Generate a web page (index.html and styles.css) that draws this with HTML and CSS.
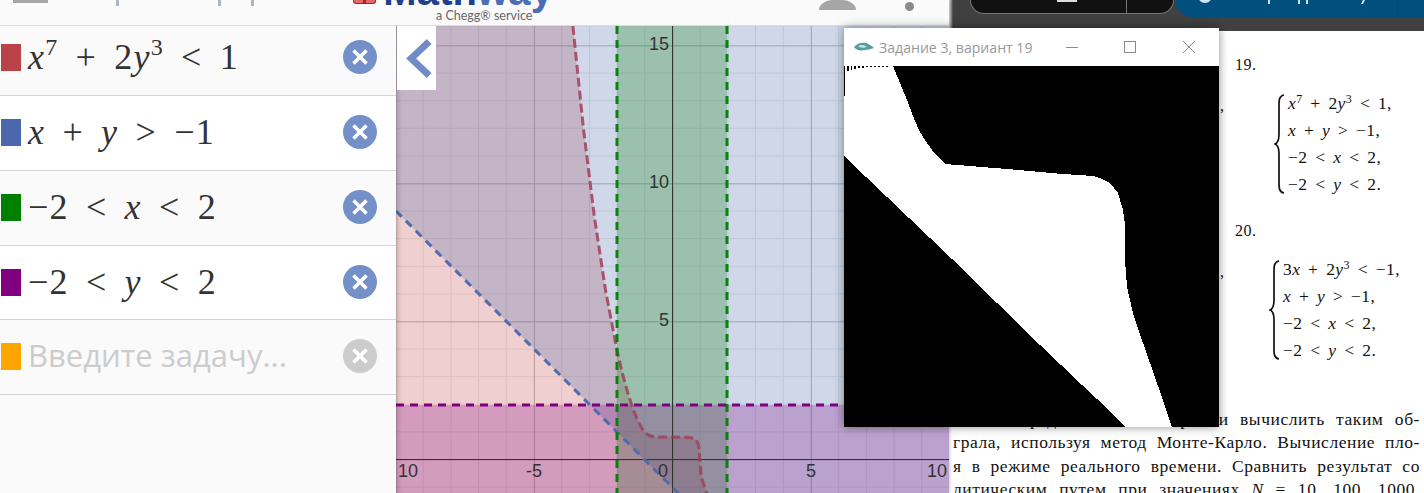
FILE: index.html
```html
<!DOCTYPE html>
<html lang="en">
<head>
    <meta charset="UTF-8">
    <meta name="viewport" content="width=device-width, initial-scale=1.0">
    <title>Задание 3, вариант 19</title>
    <link rel="stylesheet" href="styles.css">
</head>
<body>

<svg class="defs" width="0" height="0">
    <symbol id="closeIcon" viewBox="0 0 34 34">
        <circle cx="17" cy="17" r="17" fill="currentColor"/>
        <path d="M10.5 10.5 L23.5 23.5 M23.5 10.5 L10.5 23.5" stroke="#fff" stroke-width="3.6" fill="none"/>
    </symbol>
</svg>

<!-- pdf viewer, behind everything on the right -->
<div class="window pdf">
    <div class="pdf-toolbar">
        <div class="pill-dark">
            <span class="pill-glyph"></span>
            <span class="pill-divider"></span>
        </div>
        <div class="pill-blue">
            <span class="pill-circle"></span>
            <span class="tail tail-a"></span>
            <span class="tail tail-b"></span>
            <span class="tail tail-c"></span>
            <span class="tail tail-d"></span>
            <span class="pill-divider-blue"></span>
        </div>
    </div>
    <div class="pdf-page">
        <div class="problem-no">19.</div>
        <div class="system">
            <span class="comma">,</span>
            <svg class="brace" viewBox="0 0 11 100" width="11" height="100">
                <path d="M10 1 C5 2 5 6 5 12 L5 40 C5 46 4 49 1 50 C4 51 5 54 5 60 L5 88 C5 94 5 98 10 99" fill="none" stroke="#111" stroke-width="1.7"/>
            </svg>
            <div class="eqs">
                <div><i>x</i><sup>7</sup> + 2<i>y</i><sup>3</sup> &lt; 1,</div>
                <div><i>x</i> + <i>y</i> &gt; −1,</div>
                <div>−2 &lt; <i>x</i> &lt; 2,</div>
                <div>−2 &lt; <i>y</i> &lt; 2.</div>
            </div>
        </div>
        <div class="problem-no second">20.</div>
        <div class="system">
            <span class="comma">,</span>
            <svg class="brace brace-wide" viewBox="0 0 11 100" width="11" height="100">
                <path d="M10 1 C5 2 5 6 5 12 L5 40 C5 46 4 49 1 50 C4 51 5 54 5 60 L5 88 C5 94 5 98 10 99" fill="none" stroke="#111" stroke-width="1.7"/>
            </svg>
            <div class="eqs">
                <div>3<i>x</i> + 2<i>y</i><sup>3</sup> &lt; −1,</div>
                <div><i>x</i> + <i>y</i> &gt; −1,</div>
                <div>−2 &lt; <i>x</i> &lt; 2,</div>
                <div>−2 &lt; <i>y</i> &lt; 2.</div>
            </div>
        </div>
        <div class="pdf-text">
            <p>найти определённый интеграл и вычислить таким об-</p>
            <p>грала, используя метод Монте-Карло. Вычисление пло-</p>
            <p>я в режиме реального времени. Сравнить результат со</p>
            <p>литическим путем при значениях <i>N</i> = 10. 100. 1000,</p>
        </div>
    </div>
</div>

<!-- browser with the graphing page -->
<div class="window browser">
    <div class="site-header">
        <span class="hdr-bar"></span>
        <span class="hdr-tick tick-a"></span>
        <span class="hdr-tick tick-b"></span>
        <span class="hdr-tick tick-c"></span>
        <div class="logo">
            <div class="logo-top">
                <span class="logo-mark"></span>
                <span class="logo-word">Math<span class="logo-way">way</span></span>
            </div>
            <div class="logo-sub">a Chegg® service</div>
        </div>
        <span class="avatar"></span>
        <span class="menu-dot"></span>
    </div>
    <div class="site-main">
        <div class="sidebar">
            <div class="row row-first">
                <span class="swatch swatch-red"></span>
                <span class="math"><i>x</i><sup>7</sup> + 2<i>y</i><sup>3</sup> &lt; 1</span>
                <svg class="close"><use href="#closeIcon"/></svg>
            </div>
            <div class="row row-white">
                <span class="swatch swatch-blue"></span>
                <span class="math"><i>x</i> + <i>y</i> &gt; −1</span>
                <svg class="close"><use href="#closeIcon"/></svg>
            </div>
            <div class="row">
                <span class="swatch swatch-green"></span>
                <span class="math">−2 &lt; <i>x</i> &lt; 2</span>
                <svg class="close"><use href="#closeIcon"/></svg>
            </div>
            <div class="row row-white row-short">
                <span class="swatch swatch-purple"></span>
                <span class="math">−2 &lt; <i>y</i> &lt; 2</span>
                <svg class="close"><use href="#closeIcon"/></svg>
            </div>
            <div class="row">
                <span class="swatch swatch-orange"></span>
                <span class="placeholder">Введите задачу...</span>
                <svg class="close close-off"><use href="#closeIcon"/></svg>
            </div>
        </div>
        <div class="graph">
            <!-- viewBox uses page pixels: origin at 672,459, 27.7px per unit -->
            <svg class="plot" viewBox="396 26 553 467" width="553" height="467">
                <defs>
                    <pattern id="minorGrid" patternUnits="userSpaceOnUse" x="672" y="459" width="27.7" height="27.6">
                        <path d="M0 0 H27.7 M0 0 V27.6" stroke="#000" stroke-opacity=".09" stroke-width="2" fill="none"/>
                    </pattern>
                    <pattern id="majorGrid" patternUnits="userSpaceOnUse" x="672.5" y="459.5" width="138.5" height="138">
                        <path d="M0 0 H138.5 M0 0 V138" stroke="#000" stroke-opacity=".2" stroke-width="2" fill="none"/>
                    </pattern>
                </defs>
                <rect x="396" y="26" width="553" height="467" fill="#fff"/>
                <rect x="396" y="26" width="553" height="467" fill="url(#minorGrid)"/>
                <rect x="396" y="26" width="553" height="467" fill="url(#majorGrid)"/>

                <path class="region-red" d="M396 26 L572.9 26 L583.4 128.3 L594.4 217 L605.5 290 L616.6 348.3 L622.1 372.2 L627.7 392.7 L633.2 409.5 L638.8 422.6 L641.5 427.6 L644.3 431.4 L647.1 434 L649.8 435.6 L652.6 436.5 L660.9 437.1 L672 437.1 L685.9 437.2 L691.4 437.7 L694.2 438.7 L695.5 439.7 L696.9 441.4 L698.3 444.3 L699.4 450 L699.7 459 L701.1 475.2 L702.5 480.5 L705.2 489 L708 497 L396 497 Z"/>
                <path class="region-blue" d="M396 211 L682 497 L949 497 L949 26 L396 26 Z"/>
                <rect class="region-green" x="617" y="26" width="110" height="467"/>
                <rect class="region-purple" x="396" y="405" width="553" height="88"/>

                <path class="axis" d="M396 459.5 H949 M672.5 26 V493"/>

                <path class="curve-red" d="M572.9 26 L583.4 128.3 L594.4 217 L605.5 290 L616.6 348.3 L622.1 372.2 L627.7 392.7 L633.2 409.5 L638.8 422.6 L641.5 427.6 L644.3 431.4 L647.1 434 L649.8 435.6 L652.6 436.5 L660.9 437.1 L672 437.1 L685.9 437.2 L691.4 437.7 L694.2 438.7 L695.5 439.7 L696.9 441.4 L698.3 444.3 L699.4 450 L699.7 459 L701.1 475.2 L702.5 480.5 L705.2 489 L708 497"/>
                <path class="curve-blue" d="M396 211 L682 497"/>
                <path class="curve-green" d="M617 26 V493 M727 26 V493"/>
                <path class="curve-purple" d="M396 405 H949"/>

                <g class="ticks">
                    <text x="669" y="50" text-anchor="end">15</text>
                    <text x="669" y="188" text-anchor="end">10</text>
                    <text x="669" y="326" text-anchor="end">5</text>
                    <text x="398" y="477">10</text>
                    <text x="534" y="477" text-anchor="middle">-5</text>
                    <text x="663" y="477" text-anchor="middle">0</text>
                    <text x="811" y="477" text-anchor="middle">5</text>
                    <text x="937" y="477" text-anchor="middle">10</text>
                </g>
            </svg>
            <div class="collapse-btn">
                <svg viewBox="0 0 40 64" width="39" height="64">
                    <path d="M33 15 L14.5 32.5 L33 50" fill="none" stroke="#6f8cc6" stroke-width="7"/>
                </svg>
            </div>
        </div>
    </div>
</div>

<!-- the small program window on top -->
<div class="window plot-window">
    <div class="titlebar">
        <svg class="app-icon" viewBox="0 0 20 10" width="20" height="10">
            <path d="M0 5 C3 1 8 0 12 1 C15 2 18 4 20 6 C16 7 14 8 10 8 C6 9 2 8 0 5 Z" fill="#4f9ea3"/>
            <path d="M4 4 C7 2 11 3 13 5 C9 6 6 6 4 4 Z" fill="#cfe3e5"/>
        </svg>
        <span class="title-text">Задание 3, вариант 19</span>
        <svg class="win-btn btn-min" viewBox="0 0 12 12" width="12" height="12"><path d="M0 6.5 H12" stroke="#8a8a8a"/></svg>
        <svg class="win-btn btn-max" viewBox="0 0 12 12" width="12" height="12"><rect x=".5" y=".5" width="11" height="11" fill="none" stroke="#8a8a8a"/></svg>
        <svg class="win-btn btn-close" viewBox="0 0 12 12" width="12" height="12"><path d="M0 0 L12 12 M12 0 L0 12" stroke="#8a8a8a"/></svg>
    </div>
    <svg class="canvas" viewBox="844 66 375 361" width="375" height="361" shape-rendering="crispEdges">
        <rect x="844" y="66" width="375" height="361" fill="#000"/>
        <path fill="#fff" d="M845 66 L893 66 L900 83 L907 100 L913 116 L919 130 L925 140 L932 150 L938 157 L945 164 L1007 169 L1063 174 L1093 176 L1102 179 L1108 182 L1114 188 L1118 193 L1123 210 L1125 225 L1125 260 L1127 287 L1133 313 L1143 343 L1157 383 L1172 427 L1125 427 L1112 413 L1082 385 L1040 345 L952 259 L930 238 L844 156 L844 96 L845 96 Z"/>
        <path fill="#000" d="M847 66 h2 v5 h-2 Z M851 66 h1 v4 h-1 Z M854 66 h2 v3 h-2 Z M858 66 h2 v2 h-2 Z M862 66 h2 v2 h-2 Z M866 66 h2 v1 h-2 Z M870 66 h2 v1 h-2 Z M874 66 h2 v1 h-2 Z M878 66 h2 v1 h-2 Z M882 66 h2 v1 h-2 Z M886 66 h2 v1 h-2 Z"/>
    </svg>
</div>

</body>
</html>
```

FILE: styles.css
```css
body {
    margin: 0;
    width: 1424px;
    height: 493px;
    overflow: hidden;
    position: relative;
    background-color: #404040;
    font-family: "Liberation Sans", Arial, sans-serif;
}

.defs {
    position: absolute;
}

.window {
    position: absolute;
}

/* browser */
.browser {
    left: 0;
    top: 0;
    width: 949px;
    height: 493px;
    display: flex;
    flex-direction: column;
    background-color: #fafafa;
    box-shadow: 1px 0 3px rgba(0, 0, 0, 0.2);
}

.site-header {
    height: 25px;
    flex: none;
    display: flex;
    align-items: flex-start;
    border-bottom: 1px solid #dcdcdc;
    overflow: hidden;
}

.hdr-bar {
    width: 35px;
    height: 3px;
    margin-left: 13px;
    background-color: #a6a6a6;
}

.hdr-tick {
    width: 3px;
    height: 6px;
    background-color: #a9b4c4;
}

.tick-a { margin-left: 68px; }
.tick-b { margin-left: 99px; }
.tick-c { margin-left: 30px; }

.logo {
    width: 200px;
    margin-left: 99px;
}

.logo-top {
    display: flex;
    height: 9px;
}

.logo-mark {
    width: 30px;
    height: 4px;
    box-sizing: border-box;
    background: linear-gradient(90deg, #e06a6a 0 45%, #b81c22 45% 55%, #e06a6a 55%);
    border: 1px solid #b81c22;
    border-top: none;
    border-radius: 0 0 3px 3px;
}

.logo-word {
    margin-left: 7px;
    margin-top: -24px;
    font-size: 40px;
    line-height: 30px;
    font-weight: bold;
    letter-spacing: 0.1px;
    color: #1f3f8f;
}

.logo-way {
    color: #4a6db5;
}

.logo-sub {
    margin-left: 83px;
    font-family: Lato, sans-serif;
    font-size: 12.5px;
    line-height: 13px;
    color: #666;
    white-space: nowrap;
}

.avatar {
    width: 37px;
    height: 10px;
    margin-left: 266px;
    background-color: #a6a6a6;
    border-radius: 14px 14px 0 0 / 10px 10px 0 0;
}

.menu-dot {
    width: 9px;
    height: 9px;
    margin-left: 49px;
    margin-top: 2px;
    border-radius: 50%;
    background-color: #8a8a8a;
}

.site-main {
    flex: 1;
    display: flex;
    min-height: 0;
}

.sidebar {
    width: 396px;
    flex: none;
}

.row {
    height: 74px;
    display: flex;
    align-items: center;
    padding-left: 1px;
    border-bottom: 1px solid #d4d4d4;
    background-color: #fafafa;
}

.row-first {
    height: 64px;
    padding-bottom: 5px;
}

.row-short {
    height: 73px;
}

.row-white {
    background-color: #fff;
}

.swatch {
    width: 20px;
    height: 27px;
    flex: none;
    margin-top: -1px;
}

.swatch-red { background-color: #b94346; }
.swatch-blue { background-color: #4a69ad; }
.swatch-green { background-color: #008000; }
.swatch-purple { background-color: #800080; }
.swatch-orange { background-color: #ffa500; }

.math {
    margin-left: 7px;
    margin-top: -2px;
    font-family: "Liberation Serif", serif;
    font-size: 36px;
    line-height: 40px;
    letter-spacing: 1.2px;
    word-spacing: 7px;
    color: #333;
    white-space: nowrap;
}

.math sup {
    font-size: 24px;
    line-height: 0;
    vertical-align: 14px;
}

.placeholder {
    margin-left: 7px;
    margin-top: -4px;
    font-family: "Open Sans", sans-serif;
    font-size: 31px;
    color: #ccc;
    white-space: nowrap;
}

.close {
    width: 34px;
    height: 34px;
    flex: none;
    margin-left: auto;
    margin-right: 19px;
    margin-top: -2px;
    color: #7490c8;
}

.close-off {
    color: #ccc;
}

.graph {
    position: relative;
    width: 553px;
    height: 467px;
    overflow: hidden;
}

.graph::after {
    content: "";
    position: absolute;
    inset: 0;
    box-shadow: inset 5px 0 5px -3px rgba(0, 0, 0, 0.18);
}

.plot {
    display: block;
}

.region-red { fill: #bf4045; fill-opacity: 0.25; }
.region-blue { fill: #4f6cae; fill-opacity: 0.27; }
.region-green { fill: #008000; fill-opacity: 0.25; }
.region-purple { fill: #800080; fill-opacity: 0.25; }

.axis {
    stroke: #333;
    stroke-width: 1;
    fill: none;
}

.curve-red,
.curve-blue,
.curve-green,
.curve-purple {
    fill: none;
    stroke-width: 3;
    stroke-dasharray: 8 6;
}

.curve-red { stroke: #a04058; stroke-opacity: 0.85; stroke-linejoin: round; stroke-dasharray: 9 4; }
.curve-blue { stroke: #4f6cae; }
.curve-green { stroke: #008000; stroke-opacity: 0.95; }
.curve-purple { stroke: #800080; }

.ticks text {
    font-family: "Liberation Sans", Arial, sans-serif;
    font-size: 18px;
    fill: #333;
}

.collapse-btn {
    position: absolute;
    left: 1px;
    top: 0;
    width: 39px;
    height: 64px;
    z-index: 1;
    background-color: #fff;
}

.collapse-btn svg {
    display: block;
}

/* pdf viewer */
.pdf {
    left: 949px;
    top: 0;
    width: 475px;
    height: 493px;
    display: flex;
    flex-direction: column;
}

.pdf-toolbar {
    height: 31px;
    flex: none;
    display: flex;
    align-items: flex-start;
    gap: 1px;
    padding-left: 21px;
    overflow: hidden;
    background: linear-gradient(90deg, #eee, #404040 4px);
}

.pill-dark {
    width: 204px;
    height: 14px;
    box-sizing: border-box;
    display: flex;
    background-color: #111;
    border: 1px solid #777;
    border-top: none;
    border-radius: 0 0 17px 17px;
}

.pill-glyph {
    width: 20px;
    height: 2px;
    margin-left: 86px;
    background-color: #ddd;
}

.pill-divider {
    width: 1px;
    height: 14px;
    margin-left: 49px;
    background-color: #777;
}

.pill-blue {
    flex: 1;
    height: 17px;
    display: flex;
    background-color: #004f7c;
    border-radius: 0 0 0 17px;
}

.pill-circle {
    width: 14px;
    height: 14px;
    margin-top: -11px;
    margin-left: 23px;
    box-sizing: border-box;
    border: 3px solid #cfe6f5;
    border-radius: 50%;
}

.tail {
    width: 2px;
    height: 4px;
    background-color: #cfe0ea;
}

.tail-a { margin-left: 56px; }
.tail-b { margin-left: 28px; }
.tail-c { margin-left: 6px; }
.tail-d { margin-left: 54px; transform: skewX(-25deg); }

.pill-divider-blue {
    width: 1px;
    height: 16px;
    margin-left: 33px;
    background-color: #333;
}

.pdf-page {
    flex: 1;
    padding-left: 4px;
    background-color: #fff;
    color: #111;
    font-family: "Liberation Serif", serif;
    font-size: 16px;
}

.problem-no {
    margin-left: 282px;
    padding-top: 25px;
    line-height: 18px;
    letter-spacing: 0.5px;
}

.problem-no.second {
    padding-top: 28px;
}

.system {
    display: flex;
    margin-top: 20px;
    height: 100px;
}

.comma {
    margin-left: 267px;
    line-height: 18px;
    margin-top: 3px;
    width: 4px;
}

.brace {
    margin-left: 50px;
    margin-right: 3px;
    flex: none;
}

.brace-wide {
    margin-left: 45px;
}

.eqs {
    margin-top: -4px;
    font-size: 17.5px;
    line-height: 27px;
    letter-spacing: 0.4px;
    word-spacing: 3px;
    white-space: nowrap;
}

.eqs sup {
    font-size: 12px;
    line-height: 0;
    vertical-align: 6px;
}

.pdf-text {
    margin-top: 48px;
    width: 467px;
    font-size: 17.5px;
    line-height: 23.4px;
    letter-spacing: 0.55px;
}

.pdf-text p {
    margin: 0;
    white-space: nowrap;
    text-align: justify;
    text-align-last: justify;
}

/* program window */
.plot-window {
    left: 844px;
    top: 28px;
    width: 375px;
    background-color: #fff;
    box-shadow: 0 0 9px rgba(0, 0, 0, 0.45);
}

.titlebar {
    height: 38px;
    display: flex;
    align-items: center;
    font-family: "Open Sans", sans-serif;
}

.app-icon {
    margin-left: 10px;
    flex: none;
}

.title-text {
    margin-left: 5px;
    width: 170px;
    font-size: 14.1px;
    color: #999;
    white-space: nowrap;
}

.win-btn {
    flex: none;
}

.btn-min { margin-left: 17px; }
.btn-max { margin-left: 46px; }
.btn-close { margin-left: 47px; }

.canvas {
    display: block;
}
```
